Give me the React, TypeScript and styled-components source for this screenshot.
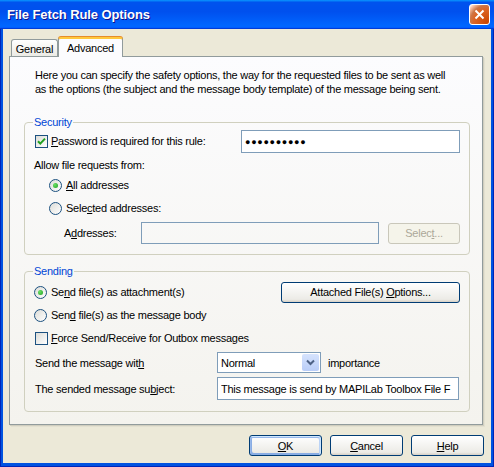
import React from 'react'
import styled, { createGlobalStyle } from 'styled-components'

/*
 * STYLES
 */

const GlobalStyle = createGlobalStyle`
  html, body {
    margin: 0;
    padding: 0;
  }
  body {
    font-family: "Liberation Sans", Arial, sans-serif;
    font-size: 11px;
    letter-spacing: -0.25px;
    color: #000;
  }
  * {
    box-sizing: border-box;
  }
`

const Window = styled.div`
  width: 494px;
  height: 467px;
  display: flex;
  flex-direction: column;
  background: #0053e1;
  box-shadow: inset 1px 0 #0025b8, inset -1px 0 #0025b8, inset 0 -1px #0025b8;
`

const TitleBar = styled.div`
  height: 29px;
  flex: none;
  display: flex;
  align-items: center;
  justify-content: space-between;
  padding: 0 4px 0 7px;
  background: linear-gradient(
    180deg,
    #0997ff,
    #0053ee 8%,
    #0050ee 40%,
    #06f 88%,
    #06f 93%,
    #005bff 95%,
    #003dd7 96%,
    #003dd7
  );
`

const Title = styled.div`
  color: #fff;
  font-weight: bold;
  font-size: 13px;
  letter-spacing: -0.1px;
  text-shadow: 1px 1px #0f1089;
`

const CloseButton = styled.div`
  width: 21px;
  height: 21px;
  border: 1px solid #fff;
  border-radius: 3px;
  display: flex;
  align-items: center;
  justify-content: center;
  background: radial-gradient(
    circle at 90% 90%,
    #cc4600 0%,
    #dc6527 55%,
    #cd7546 70%,
    #ffccb2 90%,
    #fff 100%
  );
`

const Client = styled.div`
  flex: 1;
  margin: 0 3px 4px 3px;
  background: #ece9d8;
  padding: 8px 8px 0 6px;
  display: flex;
  flex-direction: column;
`

const TabStrip = styled.div`
  height: 20px;
  display: flex;
  align-items: flex-end;
  padding-left: 2px;
  margin-bottom: -1px;
  position: relative;
  z-index: 1;
`

const Tab = styled.div<{ $active?: boolean; $width: number }>`
  width: ${(p) => p.$width}px;
  height: ${(p) => (p.$active ? 20 : 17)}px;
  margin-bottom: ${(p) => (p.$active ? 0 : 1)}px;
  display: flex;
  align-items: center;
  justify-content: center;
  padding-top: ${(p) => (p.$active ? 0 : 1)}px;
  border: 1px solid #919b9c;
  border-bottom: none;
  border-top: ${(p) => (p.$active ? '2px solid #ffc83c' : '1px solid #919b9c')};
  border-radius: 3px 3px 0 0;
  box-shadow: ${(p) => (p.$active ? '0 -1px #e68b2c' : 'none')};
  background: ${(p) =>
    p.$active ? '#fcfcfe' : 'linear-gradient(180deg, #fff, #ecebe5)'};
`

const Panel = styled.div`
  height: 369px;
  flex: none;
  border: 1px solid #919b9c;
  background: linear-gradient(180deg, #fcfcfe, #f4f3ee);
  box-shadow: 1px 1px 0 #d0cebf, 2px 2px 0 #e3e0d0;
  padding: 11px 12px 0 14px;
  display: flex;
  flex-direction: column;
`

const Description = styled.p`
  margin: 0 14px 0 11px;
  line-height: 14px;
`

const Group = styled.fieldset<{ $top: number; $bottom: number }>`
  margin: ${(p) => p.$top}px 0 0 0;
  padding: 0 0 ${(p) => p.$bottom}px 0;
  border: 1px solid #d0d0bf;
  border-radius: 4px;
  min-width: 0;
`

const Legend = styled.legend`
  color: #0046d5;
  padding: 0 1px;
  margin-left: 8px;
  line-height: 13px;
`

const Row = styled.div<{ $top: number; $height: number; $indent: number }>`
  display: flex;
  align-items: center;
  height: ${(p) => p.$height}px;
  margin-top: ${(p) => p.$top}px;
  padding: 0 9px 0 ${(p) => p.$indent}px;
`

const Option = styled.label`
  display: flex;
  align-items: center;
  line-height: 13px;
`

const CheckBox = styled.span`
  width: 13px;
  height: 13px;
  flex: none;
  margin-right: 3px;
  border: 1px solid #1c5180;
  background: linear-gradient(135deg, #dcdcd7, #fff);
  display: flex;
  align-items: center;
  justify-content: center;
`

const Radio = styled.span<{ $checked?: boolean }>`
  width: 13px;
  height: 13px;
  flex: none;
  margin-right: 4px;
  border: 1px solid #1c5180;
  border-radius: 50%;
  background: linear-gradient(135deg, #dcdcd7, #fff);
  display: flex;
  align-items: center;
  justify-content: center;

  &::after {
    content: '';
    display: ${(p) => (p.$checked ? 'block' : 'none')};
    width: 5px;
    height: 5px;
    border-radius: 50%;
    background: radial-gradient(circle at 35% 35%, #6ae066, #21a121);
  }
`

const Key = styled.span`
  text-decoration: underline;
`

const Field = styled.input<{ $width: number; $height: number }>`
  width: ${(p) => p.$width}px;
  height: ${(p) => p.$height}px;
  flex: none;
  border: 1px solid #7f9db9;
  background: #fff;
  padding: 0 3px;
  font: inherit;
  letter-spacing: inherit;
  color: #000;
  outline: none;

  &:disabled {
    background: transparent;
  }
`

const PasswordField = styled(Field)`
  font-size: 9px;
  letter-spacing: 0.7px;
  padding-left: 3px;
`

const Button = styled.button<{ $width: number; $default?: boolean }>`
  width: ${(p) => p.$width}px;
  height: 21px;
  flex: none;
  padding: 0;
  font: inherit;
  letter-spacing: inherit;
  color: #000;
  border: 1px solid #003c74;
  border-radius: 3px;
  background: linear-gradient(180deg, #fff, #ecebe6 86%, #d6d0c5);
  box-shadow: ${(p) =>
    p.$default
      ? 'inset -1px 1px #cee7ff, inset 1px 2px #98b8ea, inset -2px 2px #bcd4f6, inset 1px -1px #89ade4, inset 2px -2px #89ade4'
      : 'none'};

  &:disabled {
    background: #f5f4ea;
    border-color: #c9c7ba;
    color: #aca899;
  }
`

const Label = styled.span<{ $width?: number }>`
  width: ${(p) => (p.$width ? `${p.$width}px` : 'auto')};
  flex: none;
`

const Select = styled.div`
  width: 104px;
  height: 21px;
  flex: none;
  display: flex;
  align-items: center;
  justify-content: space-between;
  border: 1px solid #7f9db9;
  background: #fff;
  padding: 1px 1px 1px 3px;
  margin-right: 7px;
`

const SelectArrow = styled.span`
  width: 17px;
  height: 17px;
  border-radius: 2px;
  background: linear-gradient(180deg, #d6e3fd, #b9cdf8);
  display: flex;
  align-items: center;
  justify-content: center;
`

const Spacer = styled.div`
  flex: 1;
`

const Footer = styled.div`
  display: flex;
  justify-content: flex-end;
  gap: 8px;
  margin: 10px -1px 0 0;
`

/*
 * COMPONENT
 */

const Check = () => (
  <svg width="9" height="9" viewBox="0 0 9 9">
    <path d="M1 4.2 L3.3 6.6 L8 1.6" stroke="#21a121" strokeWidth="2" fill="none" />
  </svg>
)

const App = () => {
  return (
    <Window>
      <GlobalStyle />
      <TitleBar>
        <Title>File Fetch Rule Options</Title>
        <CloseButton>
          <svg width="11" height="11" viewBox="0 0 11 11">
            <path d="M1.5 1.5 L9.5 9.5 M9.5 1.5 L1.5 9.5" stroke="#fff" strokeWidth="2" />
          </svg>
        </CloseButton>
      </TitleBar>
      <Client>
        <TabStrip>
          <Tab $width={47}>General</Tab>
          <Tab $width={65} $active>
            Advanced
          </Tab>
        </TabStrip>
        <Panel>
          <Description>
            Here you can specify the safety options, the way for the requested files to be sent as
            well as the options (the subject and the message body template) of the message being
            sent.
          </Description>

          <Group $top={20} $bottom={10}>
            <Legend>Security</Legend>
            <Row $top={1} $height={23} $indent={10}>
              <Option>
                <CheckBox>
                  <Check />
                </CheckBox>
                <span>
                  <Key>P</Key>assword is required for this rule:
                </span>
              </Option>
              <Spacer />
              <PasswordField $width={219} $height={23} readOnly value="●●●●●●●●●●" />
            </Row>
            <Row $top={5} $height={13} $indent={9}>
              Allow file requests from:
            </Row>
            <Row $top={6} $height={16} $indent={24}>
              <Option>
                <Radio $checked />
                <span>
                  <Key>A</Key>ll addresses
                </span>
              </Option>
            </Row>
            <Row $top={7} $height={16} $indent={24}>
              <Option>
                <Radio />
                <span>
                  Sele<Key>c</Key>ted addresses:
                </span>
              </Option>
            </Row>
            <Row $top={6} $height={22} $indent={39}>
              <Label $width={77}>
                A<Key>d</Key>dresses:
              </Label>
              <Field $width={238} $height={22} disabled />
              <Spacer />
              <Button $width={72} disabled>
                Selec<Key>t</Key>...
              </Button>
            </Row>
          </Group>

          <Group $top={10} $bottom={11}>
            <Legend>Sending</Legend>
            <Row $top={4} $height={20} $indent={9}>
              <Option>
                <Radio $checked />
                <span>
                  Se<Key>n</Key>d file(s) as attachment(s)
                </span>
              </Option>
              <Spacer />
              <Button $width={179}>
                Attached File(s) <Key>O</Key>ptions...
              </Button>
            </Row>
            <Row $top={5} $height={16} $indent={9}>
              <Option>
                <Radio />
                <span>
                  Sen<Key>d</Key> file(s) as the message body
                </span>
              </Option>
            </Row>
            <Row $top={7} $height={16} $indent={10}>
              <Option>
                <CheckBox />
                <span>
                  <Key>F</Key>orce Send/Receive for Outbox messages
                </span>
              </Option>
            </Row>
            <Row $top={6} $height={21} $indent={10}>
              <Label $width={182}>
                Send the message wit<Key>h</Key>
              </Label>
              <Select>
                <span>Normal</span>
                <SelectArrow>
                  <svg width="9" height="7" viewBox="0 0 9 7">
                    <path d="M1 1.5 L4.5 5 L8 1.5" stroke="#4d6185" strokeWidth="2" fill="none" />
                  </svg>
                </SelectArrow>
              </Select>
              <span>importance</span>
            </Row>
            <Row $top={4} $height={23} $indent={10}>
              <Label $width={182}>
                The sended message su<Key>b</Key>ject:
              </Label>
              <Field
                $width={242}
                $height={23}
                readOnly
                value="This message is send by MAPILab Toolbox File F"
              />
            </Row>
          </Group>
        </Panel>
        <Footer>
          <Button $width={73} $default>
            <Key>O</Key>K
          </Button>
          <Button $width={73}>
            <Key>C</Key>ancel
          </Button>
          <Button $width={73}>
            <Key>H</Key>elp
          </Button>
        </Footer>
      </Client>
    </Window>
  )
}

export default App
